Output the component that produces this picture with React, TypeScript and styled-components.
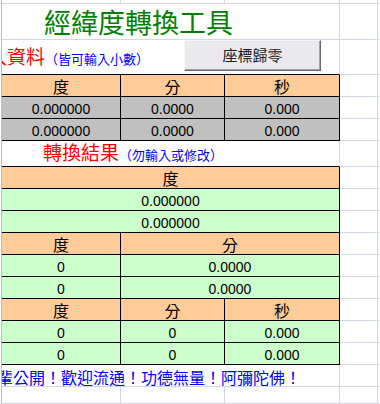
import React from 'react';
import styled, { createGlobalStyle } from 'styled-components';

const GRID = '#d0d7e5';
const INK = '#000000';
const CJK = '"Noto Sans CJK TC", "Noto Sans CJK SC", sans-serif';

type Line = 'grid' | 'ink' | 'none';
const lineColor = (l: Line) => (l === 'grid' ? GRID : l === 'ink' ? INK : 'transparent');

const Global = createGlobalStyle`
  html, body { margin: 0; padding: 0; background: #ffffff; overflow: hidden; }
  body { font-family: "Liberation Sans", "Noto Sans CJK TC", sans-serif; }
`;

const Sheet = styled.div`
  box-sizing: border-box;
  width: 379px;
  height: 404px;
  margin-left: 1px;
  border-left: 1px solid #a9c0e0;
  overflow: hidden;
  display: grid;
  grid-template-columns: 119px 104px 115px 38px 1fr;
  grid-template-rows: 4px 36px 35px 22px 22px 22px 26px repeat(9, 22px) 22px 1fr;
  background: #ffffff;
`;

const Cell = styled.div<{ $span?: number; $right?: Line; $bottom?: Line }>`
  box-sizing: border-box;
  min-width: 0;
  grid-column: span ${(p) => p.$span ?? 1};
  border-right: 1px solid ${(p) => lineColor(p.$right ?? 'grid')};
  border-bottom: 1px solid ${(p) => lineColor(p.$bottom ?? 'grid')};
`;

const TitleCell = styled(Cell)`
  display: flex;
  align-items: flex-end;
  padding: 0 0 2px 42px;
  white-space: nowrap;
  font-family: ${CJK};
  font-size: 27px;
  line-height: 30px;
  color: #008000;
`;

const BannerCell = styled(Cell)`
  display: flex;
  align-items: center;
  white-space: nowrap;
`;

const Caption = styled.div<{ $indent: number }>`
  flex: none;
  margin-left: ${(p) => p.$indent}px;
  font-family: ${CJK};
  line-height: 22px;
`;

const Heading = styled.span`
  font-size: 19px;
  color: #ff0000;
`;

const Hint = styled.span`
  font-size: 13px;
  color: #0000ff;
`;

const ZeroButton = styled.button`
  box-sizing: border-box;
  flex: none;
  align-self: flex-start;
  width: 137px;
  height: 31px;
  margin: 0 18px 0 auto;
  padding: 0 0 2px;
  background: #ebe9ed;
  border: 1px solid;
  border-color: #f7f7f7 #6a6a6a #6a6a6a #f7f7f7;
  box-shadow: inset -1px -1px 0 #a2a2a2;
  font-family: ${CJK};
  font-size: 15px;
  color: #1e1e1e;
`;

const FooterCell = styled(Cell)`
  display: flex;
  align-items: center;
  padding-top: 2px;
  white-space: nowrap;
`;

const Blessing = styled.span`
  flex: none;
  margin-left: -5px;
  font-family: ${CJK};
  font-size: 16px;
  line-height: 18px;
  color: #0000ff;
`;

const tones = {
  head: '#ffcc99',
  input: '#c0c0c0',
  output: '#ccffcc',
};
type Tone = keyof typeof tones;

const TableCell = styled.div<{ $span?: number; $tone: Tone }>`
  box-sizing: border-box;
  min-width: 0;
  grid-column: span ${(p) => p.$span ?? 1};
  display: flex;
  align-items: flex-end;
  justify-content: center;
  padding-bottom: 1px;
  background: ${(p) => tones[p.$tone]};
  border-right: 1px solid ${INK};
  border-bottom: 1px solid ${INK};
  color: #000000;
  font-family: ${(p) => (p.$tone === 'head' ? CJK : '"Liberation Sans", sans-serif')};
  font-size: ${(p) => (p.$tone === 'head' ? '16px' : '14px')};
  line-height: ${(p) => (p.$tone === 'head' ? '18px' : '16px')};
  white-space: nowrap;
`;

const Side: React.FC = () => (
  <>
    <Cell />
    <Cell $right="none" />
  </>
);

type RowDef = { tone: Tone; cells: { text: string; span?: number }[] };

const rows1: RowDef[] = [
  { tone: 'head', cells: [{ text: '度' }, { text: '分' }, { text: '秒' }] },
  { tone: 'input', cells: [{ text: '0.000000' }, { text: '0.0000' }, { text: '0.000' }] },
  { tone: 'input', cells: [{ text: '0.000000' }, { text: '0.0000' }, { text: '0.000' }] },
];

const rows2: RowDef[] = [
  { tone: 'head', cells: [{ text: '度', span: 3 }] },
  { tone: 'output', cells: [{ text: '0.000000', span: 3 }] },
  { tone: 'output', cells: [{ text: '0.000000', span: 3 }] },
  { tone: 'head', cells: [{ text: '度' }, { text: '分', span: 2 }] },
  { tone: 'output', cells: [{ text: '0' }, { text: '0.0000', span: 2 }] },
  { tone: 'output', cells: [{ text: '0' }, { text: '0.0000', span: 2 }] },
  { tone: 'head', cells: [{ text: '度' }, { text: '分' }, { text: '秒' }] },
  { tone: 'output', cells: [{ text: '0' }, { text: '0' }, { text: '0.000' }] },
  { tone: 'output', cells: [{ text: '0' }, { text: '0' }, { text: '0.000' }] },
];

const TableRows: React.FC<{ rows: RowDef[] }> = ({ rows }) => (
  <>
    {rows.map((r, i) => (
      <React.Fragment key={i}>
        {r.cells.map((c, j) => (
          <TableCell key={j} $tone={r.tone} $span={c.span}>
            {c.text}
          </TableCell>
        ))}
        <Side />
      </React.Fragment>
    ))}
  </>
);

export default function App() {
  return (
    <>
      <Global />
      <Sheet>
        {/* top strip */}
        <Cell />
        <Cell />
        <Cell />
        <Side />

        {/* title */}
        <TitleCell $span={3}>經緯度轉換工具</TitleCell>
        <Side />

        {/* input banner */}
        <BannerCell $span={3} $bottom="ink">
          <Caption $indent={-33}>
            <Heading>輸入資料</Heading>
            <Hint>（皆可輸入小數）</Hint>
          </Caption>
          <ZeroButton type="button">座標歸零</ZeroButton>
        </BannerCell>
        <Side />

        <TableRows rows={rows1} />

        {/* result banner */}
        <BannerCell $span={3} $bottom="ink">
          <Caption $indent={41}>
            <Heading>轉換結果</Heading>
            <Hint>（勿輸入或修改）</Hint>
          </Caption>
        </BannerCell>
        <Side />

        <TableRows rows={rows2} />

        {/* footer */}
        <FooterCell $span={3}>
          <Blessing>輩公開！歡迎流通！功德無量！阿彌陀佛！</Blessing>
        </FooterCell>
        <Side />

        <Cell />
        <Cell />
        <Cell />
        <Side />
      </Sheet>
    </>
  );
}
